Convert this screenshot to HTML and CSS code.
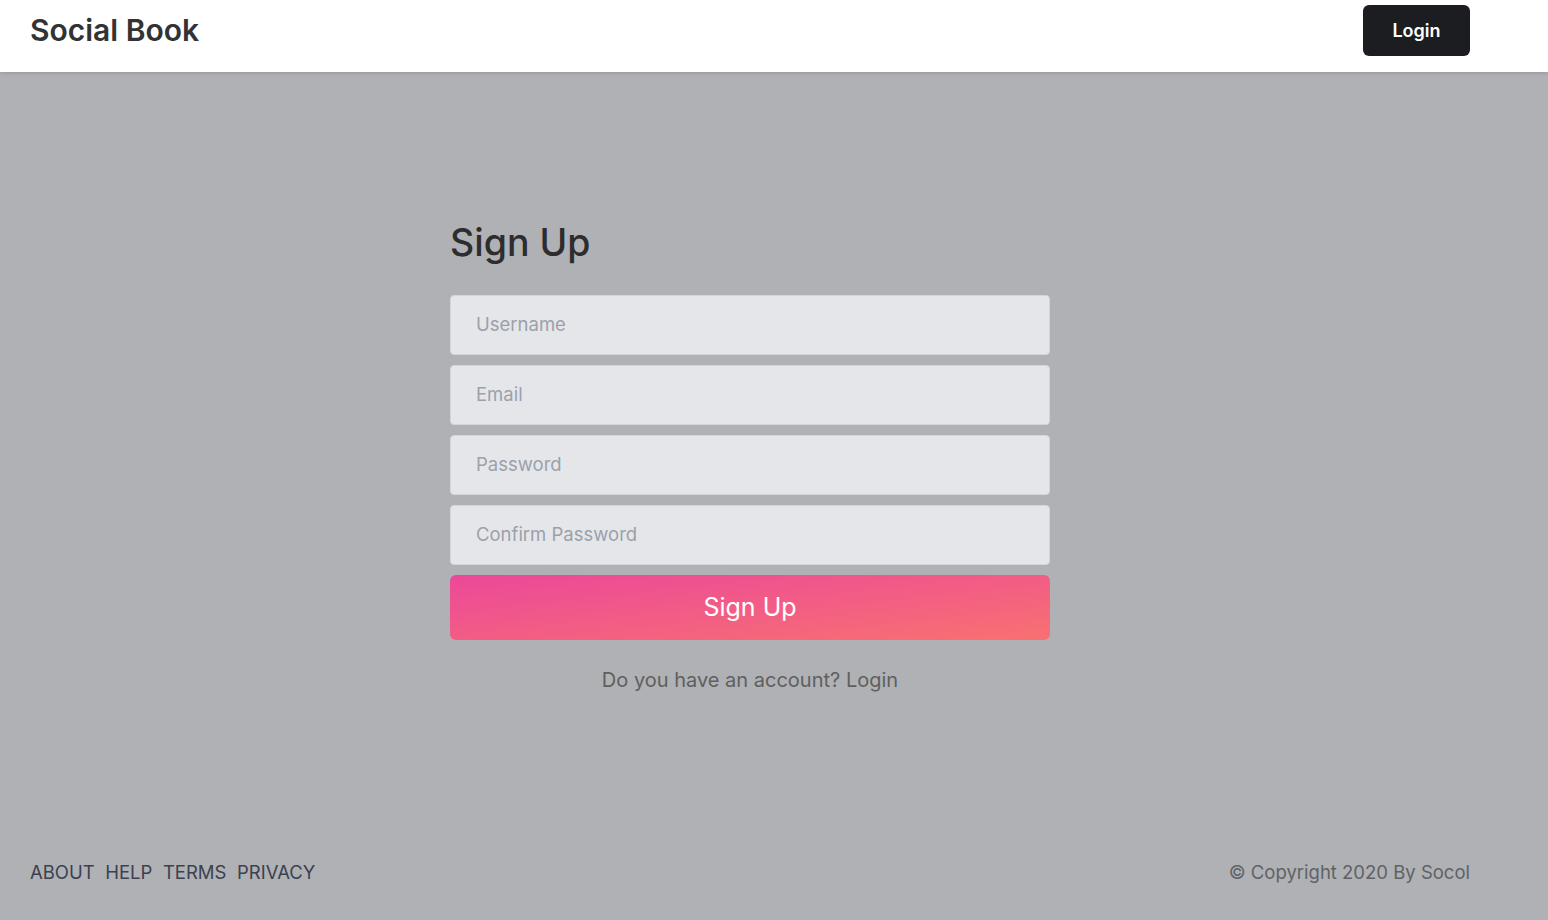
FILE: index.html
```html
<!DOCTYPE html>
<html lang="en">
<head>
    <meta charset="UTF-8">
    <meta name="viewport" content="width=device-width, initial-scale=1.0">
    <title>Social Book - Sign Up</title>
    <link rel="stylesheet" href="styles.css">
</head>
<body>

    <!-- Barre du haut -->
    <header class="topbar">
        <div class="topbar-inner">
            <a href="#" class="brand">Social Book</a>
            <a href="#" class="btn-login">Login</a>
        </div>
    </header>

    <!-- Formulaire d'inscription -->
    <main class="page">
        <div class="signup">
            <h1>Sign Up</h1>
            <form class="signup-form">
                <input type="text" placeholder="Username">
                <input type="email" placeholder="Email">
                <input type="password" placeholder="Password">
                <input type="password" placeholder="Confirm Password">
                <button type="submit" class="btn-signup">Sign Up</button>
            </form>
            <p class="switch">Do you have an account? <a href="#">Login</a></p>
        </div>
    </main>

    <!-- Pied de page -->
    <footer class="footer">
        <nav class="footer-links">
            <a href="#">ABOUT</a>
            <a href="#">HELP</a>
            <a href="#">TERMS</a>
            <a href="#">PRIVACY</a>
        </nav>
        <span class="copyright">&copy; Copyright 2020 By Socol</span>
    </footer>

</body>
</html>
```

FILE: styles.css
```css
/* Style général */
* {
    box-sizing: border-box;
}

body {
    font-family: Inter, "Noto Sans", sans-serif;
    margin: 0;
    padding: 0;
    min-height: 100vh;
    display: flex;
    flex-direction: column;
    background-color: #afb1b5;
    color: #333;
}

a {
    text-decoration: none;
    color: inherit;
}

/* Barre du haut */
.topbar {
    background-color: #fff;
    height: 72px;
    box-shadow: 0 1px 4px rgba(0, 0, 0, 0.15);
}

.topbar-inner {
    width: 1440px;
    margin-left: 30px;
    height: 100%;
    display: flex;
    align-items: center;
    justify-content: space-between;
}

.brand {
    font-size: 30px;
    font-weight: 600;
    color: #333;
    margin-top: -12px;
}

.btn-login {
    background-color: #1c1d21;
    color: #fff;
    font-size: 18px;
    font-weight: 600;
    width: 107px;
    height: 51px;
    border-radius: 6px;
    display: flex;
    align-items: center;
    justify-content: center;
    margin-top: -11px;
}

/* Formulaire */
.page {
    flex: 1;
    width: 1440px;
    margin-left: 30px;
    display: flex;
    justify-content: center;
}

.signup {
    width: 600px;
    padding-top: 149px;
}

.signup h1 {
    font-size: 37.5px;
    font-weight: 500;
    line-height: 44px;
    margin: 0 0 30px;
    color: #2d2d2d;
}

.signup-form {
    display: flex;
    flex-direction: column;
    gap: 10px;
}

.signup-form input {
    height: 60px;
    padding: 0 25px 2px;
    border: 1px solid #d3d5d9;
    border-radius: 4px;
    background-color: #e5e6ea;
    font-family: inherit;
    font-size: 18.5px;
    color: #333;
}

.signup-form input::placeholder {
    color: #9ba1ab;
}

.btn-signup {
    height: 65px;
    padding-bottom: 2px;
    border: none;
    border-radius: 6px;
    background: linear-gradient(to bottom right, #ec4899, #f87171);
    color: #fff;
    font-family: inherit;
    font-size: 25px;
    cursor: pointer;
}

.switch {
    text-align: center;
    font-size: 20px;
    color: #5f5f5f;
    margin: 28px 0 0;
}

/* Pied de page */
.footer {
    width: 1440px;
    margin-left: 30px;
    display: flex;
    justify-content: space-between;
    padding-bottom: 36px;
    font-size: 18.5px;
    line-height: 24px;
}

.footer-links {
    display: flex;
    gap: 10.5px;
    color: #3b4150;
}

.copyright {
    color: #606266;
}
```
